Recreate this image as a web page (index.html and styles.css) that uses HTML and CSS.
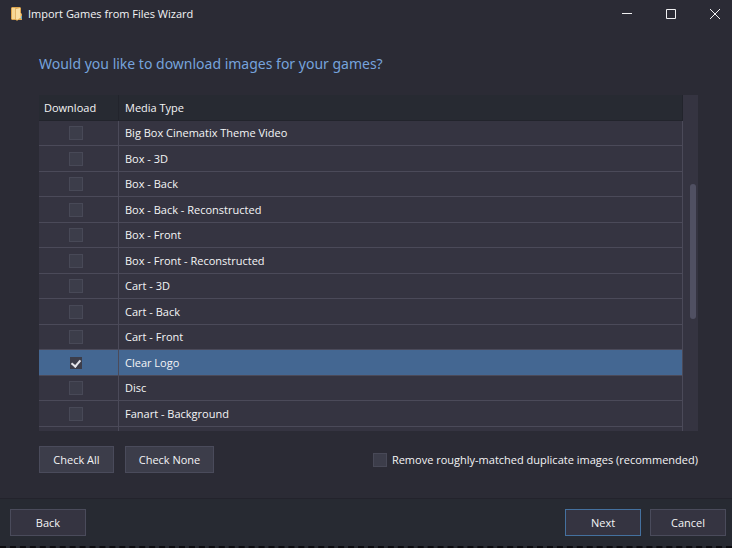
FILE: index.html
```html
<!DOCTYPE html>
<html lang="en">
<head>
<meta charset="utf-8">
<title>Import Games from Files Wizard</title>
<link rel="stylesheet" href="styles.css">
</head>
<body>
<header class="titlebar">
  <svg class="app-icon" width="13" height="16" viewBox="0 0 13 16" aria-hidden="true">
    <path d="M1 2l1-1h8l1 1v5l1 1v6H8l-1 1-1-1H2l-1-1z" fill="#dda650"/>
    <path d="M2 2h3v11H2z" fill="#f6d795"/>
    <path d="M6 3l4-1v10l-3 2-1-1z" fill="#fae0a6"/>
    <path d="M5 2h1v11H5z" fill="#e2b469"/>
    <path d="M10 7h1v5h-1z" fill="#f0c983"/>
    <path d="M11 10h1v3h-1z" fill="#6fb0c0"/>
  </svg>
  <h1 class="title">Import Games from Files Wizard</h1>
  <div class="window-controls">
    <button class="window-button" type="button" aria-label="Minimize"><svg width="12" height="12" viewBox="0 0 12 12"><path d="M1 5.500h10"/></svg></button>
    <button class="window-button" type="button" aria-label="Maximize"><svg width="12" height="12" viewBox="0 0 12 12"><path d="M1.500 1.500h9v9h-9z"/></svg></button>
    <button class="window-button" type="button" aria-label="Close"><svg width="12" height="12" viewBox="0 0 12 12"><path d="M1 1l10 10M11 1L1 11"/></svg></button>
  </div>
</header>
<main class="content">
  <h2 class="question">Would you like to download images for your games?</h2>
  <div class="grid">
    <div class="grid-view">
      <table class="media">
        <thead><tr><th class="pick" scope="col">Download</th><th scope="col">Media Type</th></tr></thead>
        <tbody>
          <tr><td class="pick"><input type="checkbox" id="m1"></td><td><label for="m1">Big Box Cinematix Theme Video</label></td></tr>
          <tr><td class="pick"><input type="checkbox" id="m2"></td><td><label for="m2">Box - 3D</label></td></tr>
          <tr><td class="pick"><input type="checkbox" id="m3"></td><td><label for="m3">Box - Back</label></td></tr>
          <tr><td class="pick"><input type="checkbox" id="m4"></td><td><label for="m4">Box - Back - Reconstructed</label></td></tr>
          <tr><td class="pick"><input type="checkbox" id="m5"></td><td><label for="m5">Box - Front</label></td></tr>
          <tr><td class="pick"><input type="checkbox" id="m6"></td><td><label for="m6">Box - Front - Reconstructed</label></td></tr>
          <tr><td class="pick"><input type="checkbox" id="m7"></td><td><label for="m7">Cart - 3D</label></td></tr>
          <tr><td class="pick"><input type="checkbox" id="m8"></td><td><label for="m8">Cart - Back</label></td></tr>
          <tr><td class="pick"><input type="checkbox" id="m9"></td><td><label for="m9">Cart - Front</label></td></tr>
          <tr class="selected"><td class="pick"><input type="checkbox" id="m10" checked></td><td><label for="m10">Clear Logo</label></td></tr>
          <tr><td class="pick"><input type="checkbox" id="m11"></td><td><label for="m11">Disc</label></td></tr>
          <tr><td class="pick"><input type="checkbox" id="m12"></td><td><label for="m12">Fanart - Background</label></td></tr>
          <tr><td class="pick"></td><td></td></tr>
        </tbody>
      </table>
    </div>
    <div class="scrollbar"><div class="thumb"></div></div>
  </div>
  <div class="options">
    <button class="button" type="button">Check All</button>
    <button class="button button-wide" type="button">Check None</button>
    <label class="option"><input type="checkbox">Remove roughly-matched duplicate images (recommended)</label>
  </div>
</main>
<footer class="footer">
  <button class="button nav" type="button">Back</button>
  <button class="button nav primary" type="button">Next</button>
  <button class="button nav" type="button">Cancel</button>
</footer>
</body>
</html>
```
FILE: styles.css
```css
* {
  box-sizing: border-box;
}

body {
  margin: 0;
  height: 100vh;
  display: flex;
  flex-direction: column;
  overflow: hidden;
  background: #2b2b35;
  color: #f4f4f6;
  font: 11px/16px "Open Sans", "Noto Sans", sans-serif;
}

button,
input {
  font: inherit;
  color: inherit;
  margin: 0;
}

.titlebar {
  display: flex;
  align-items: center;
  height: 28px;
  padding-left: 10px;
}

.title {
  flex: 1;
  margin: 0 0 0 5px;
  font-size: 11px;
  font-weight: 400;
}

.window-controls {
  display: flex;
  gap: 8px;
  margin-right: -1px;
}

.window-button {
  display: grid;
  place-items: center;
  width: 36px;
  height: 28px;
  padding: 0;
  border: 0;
  background: none;
}

.window-button path {
  fill: none;
  stroke: #f0f0f2;
}

.content {
  flex: 1;
  min-height: 0;
  display: flex;
  flex-direction: column;
  padding: 24px 34px 25px 39px;
}

.question {
  margin: 0 0 19px;
  color: #76a3dc;
  font-family: "Noto Sans", "Open Sans", sans-serif;
  font-size: 14px;
  font-weight: 400;
  line-height: 24px;
}

.grid {
  flex: 1;
  min-height: 0;
  display: flex;
  background: #353441;
}

.grid-view {
  flex: 1;
  overflow: hidden;
}

.media {
  width: 100%;
  table-layout: fixed;
  border-collapse: separate;
  border-spacing: 0;
}

.media th,
.media td {
  height: 25px;
  padding: 0 6px;
  text-align: left;
  border-right: 1px solid #4b4a59;
  border-bottom: 1px solid #4b4a59;
}

.media th {
  height: 26px;
  font-weight: 400;
  background: #272a32;
  border-color: #22242c;
}

.media tr:nth-child(even) td {
  height: 26px;
}

.media .pick {
  width: 80px;
  padding-left: 5px;
}

.media td.pick {
  padding: 0 5px 0 0;
}

.media td.pick input {
  display: block;
  margin: 0 auto;
}

.media label {
  display: block;
}

.media .selected td {
  background: #446792;
}

input[type="checkbox"] {
  appearance: none;
  display: inline-block;
  width: 14px;
  height: 14px;
  border: 1px solid #484957;
  background: #3c3d4a;
}

.pick input[type="checkbox"]:checked {
  width: 12px;
  height: 12px;
  border-color: #3c3d4a;
}

input[type="checkbox"]:checked::before {
  content: "";
  display: block;
  width: 4px;
  height: 7px;
  margin: 0 auto;
  border: solid #e4e4ea;
  border-width: 0 2px 2px 0;
  transform: rotate(40deg);
}

.scrollbar {
  display: grid;
  grid-template-rows: 89fr 135fr 112fr;
  width: 15px;
  padding: 0 2px 0 7px;
}

.thumb {
  grid-row: 2;
  border-radius: 3px;
  background: #505062;
}

.options {
  display: flex;
  align-items: center;
  gap: 11px;
  margin-top: 15px;
}

.button {
  width: 75px;
  height: 27px;
  padding: 0;
  border: 1px solid #4a4b5b;
  background: #3c3d4a;
}

.button-wide {
  width: 89px;
}

.option {
  display: flex;
  align-items: center;
  gap: 5px;
  margin-left: auto;
}

.footer {
  display: flex;
  gap: 9px;
  padding: 10px 6px 10px 10px;
  border-top: 1px solid #23232c;
  border-bottom: 2px dashed #0c0c10;
  background: #272a32;
}

.nav {
  width: 76px;
  background: #353441;
}

.primary {
  margin-left: auto;
  border-color: #44719f;
}
```
